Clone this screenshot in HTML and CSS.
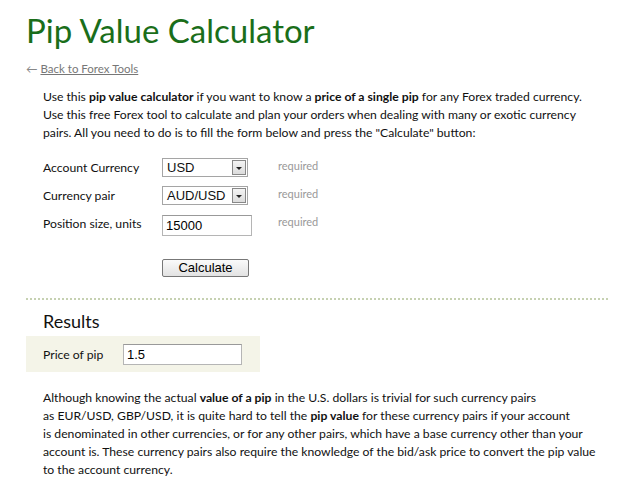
FILE: index.html
```html
<!DOCTYPE html>
<html lang="en">
<head>
    <meta charset="UTF-8">
    <title>Pip Value Calculator</title>
    <link rel="stylesheet" href="styles.css">
</head>
<body>
    <div class="page">
        <h1>Pip Value Calculator</h1>
        <div class="back">&larr; <a href="#">Back to Forex Tools</a></div>

        <p class="intro">Use this <b>pip value calculator</b> if you want to know a <b>price of a single pip</b> for any Forex traded currency.<br>Use this free Forex tool to calculate and plan your orders when dealing with many or exotic currency<br>pairs. All you need to do is to fill the form below and press the "Calculate" button:</p>

        <form class="calc">
            <div class="row">
                <label class="lbl">Account Currency</label>
                <div class="ctl">
                    <div class="fake-select">
                        <span>USD</span>
                        <span class="arrow"></span>
                    </div>
                </div>
                <span class="req">required</span>
            </div>
            <div class="row">
                <label class="lbl">Currency pair</label>
                <div class="ctl">
                    <div class="fake-select">
                        <span>AUD/USD</span>
                        <span class="arrow"></span>
                    </div>
                </div>
                <span class="req">required</span>
            </div>
            <div class="row">
                <label class="lbl">Position size, units</label>
                <div class="ctl">
                    <input class="field" type="text" value="15000">
                </div>
                <span class="req">required</span>
            </div>
            <div class="row submit">
                <span class="lbl"></span>
                <button type="button" class="btn">Calculate</button>
            </div>
        </form>

        <div class="divider"></div>

        <h2>Results</h2>
        <div class="results">
            <span class="res-lbl">Price of pip</span>
            <input class="field res-field" type="text" value="1.5">
        </div>

        <p class="note">Although knowing the actual <b>value of a pip</b> in the U.S. dollars is trivial for such currency pairs<br>as EUR/USD, GBP/USD, it is quite hard to tell the <b>pip value</b> for these currency pairs if your account<br>is denominated in other currencies, or for any other pairs, which have a base currency other than your<br>account is. These currency pairs also require the knowledge of the bid/ask price to convert the pip value<br>to the account currency.</p>
    </div>
</body>
</html>
```

FILE: styles.css
```css
* {
    margin: 0;
    padding: 0;
    box-sizing: border-box;
}

body {
    background: #fff;
    font-family: "Lato", "DejaVu Sans", sans-serif;
    font-size: 12.2px;
    color: #111;
}

.page {
    padding: 10px 18px 0 26px;
}

h1 {
    font-weight: normal;
    font-size: 33px;
    line-height: 40px;
    color: #1a6e1a;
}

.back {
    margin-top: 11px;
    line-height: 16px;
    color: #888;
    font-size: 11.5px;
}

.back a {
    color: #777;
}

.intro,
.note {
    margin-left: 17px;
    line-height: 18px;
    white-space: nowrap;
}

.intro {
    margin-top: 11px;
}

.calc {
    margin: 13px 0 0 17px;
}

.row {
    display: flex;
    align-items: flex-start;
    height: 28px;
}

.lbl {
    width: 119px;
    padding-top: 5px;
}

.ctl {
    width: 116px;
}

.fake-select {
    width: 86px;
    height: 19px;
    margin-top: 3px;
    padding-left: 4px;
    border: 1px solid #a5a5a5;
    display: flex;
    justify-content: space-between;
    align-items: center;
    font-family: "Liberation Sans", Arial, sans-serif;
    font-size: 13px;
}

.arrow {
    width: 14px;
    height: 15px;
    margin-right: 1px;
    border: 1px solid #888;
    background: linear-gradient(#f4f4f4, #dcdcdc);
    position: relative;
}

.arrow::after {
    content: "";
    position: absolute;
    left: 3px;
    top: 6px;
    border-left: 3px solid transparent;
    border-right: 3px solid transparent;
    border-top: 3px solid #222;
}

.req {
    color: #999;
    font-size: 11px;
    padding-top: 4px;
}

.field {
    width: 90px;
    height: 21px;
    margin-top: 4px;
    padding-left: 3px;
    border: 1px solid #b5b5b5;
    border-top-color: #999;
    font-family: "Liberation Sans", Arial, sans-serif;
    font-size: 13px;
    color: #000;
}

.submit {
    margin-top: 20px;
    height: auto;
}

.btn {
    width: 87px;
    height: 18px;
    border: 1px solid #777;
    border-radius: 2px;
    background: linear-gradient(#fafafa, #e2e2e2);
    font-family: "Liberation Sans", Arial, sans-serif;
    font-size: 13px;
    line-height: 14px;
    color: #000;
}

.divider {
    margin-top: 21px;
    width: 582px;
    border-top: 2px dotted #c6d1b2;
}

h2 {
    font-weight: normal;
    font-size: 18px;
    line-height: 22px;
    margin: 10px 0 0 17px;
    color: #111;
}

.results {
    width: 234px;
    height: 36px;
    margin-top: 4px;
    padding-left: 17px;
    background: #f4f4e8;
    display: flex;
    align-items: center;
}

.res-lbl {
    width: 80px;
}

.res-field {
    width: 119px;
    margin-top: 0;
}

.note {
    margin-top: 17px;
}
```
